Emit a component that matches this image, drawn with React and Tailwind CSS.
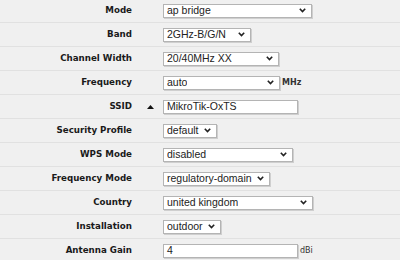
import React from 'react';

const Chevron = () => (
  <svg width="7" height="5" viewBox="0 0 7 5" className="shrink-0">
    <path d="M0.8 0.8 L3.5 3.6 L6.2 0.8" fill="none" stroke="#222" strokeWidth="1.6" />
  </svg>
);

const Select = ({ value, width }) => (
  <div
    className="h-[14px] flex items-center justify-between bg-white border border-[#b4b4b4] shadow-[1px_1px_0_#cfcfcf] pl-[3px] pr-[5px] text-[10.5px] text-[#222] leading-none"
    style={{ width }}
  >
    <span className="truncate">{value}</span>
    <Chevron />
  </div>
);

const TextBox = ({ value, width }) => (
  <div
    className="h-[14px] flex items-center bg-white border border-[#b4b4b4] shadow-[1px_1px_0_#cfcfcf] pl-[3px] text-[10.5px] text-[#222] leading-none"
    style={{ width }}
  >
    {value}
  </div>
);

const rows = [
  { label: 'Mode', kind: 'select', value: 'ap bridge', width: 149 },
  { label: 'Band', kind: 'select', value: '2GHz-B/G/N', width: 88 },
  { label: 'Channel Width', kind: 'select', value: '20/40MHz XX', width: 116 },
  { label: 'Frequency', kind: 'select', value: 'auto', width: 117, unit: 'MHz', unitBold: true },
  { label: 'SSID', kind: 'text', value: 'MikroTik-OxTS', width: 135, toggle: true },
  { label: 'Security Profile', kind: 'select', value: 'default', width: 54 },
  { label: 'WPS Mode', kind: 'select', value: 'disabled', width: 130 },
  { label: 'Frequency Mode', kind: 'select', value: 'regulatory-domain', width: 107 },
  { label: 'Country', kind: 'select', value: 'united kingdom', width: 150 },
  { label: 'Installation', kind: 'select', value: 'outdoor', width: 58 },
  { label: 'Antenna Gain', kind: 'text', value: '4', width: 135, unit: 'dBi' },
];

export default function App() {
  return (
    <div className="w-[400px] h-[260px] overflow-hidden bg-[#f0f0f0] font-['DejaVu_Sans',sans-serif]">
      <div className="-mt-px">
        {rows.map((row) => (
          <div key={row.label} className="h-[24px] flex items-center border-b border-[#e1e1e1]">
            <div className="w-[132px] text-right text-[8.7px] font-bold text-[#1a1a1a] leading-none">
              {row.label}
            </div>
            <div className="w-[31px] flex justify-end pr-[9px]">
              {row.toggle && (
                <svg width="7" height="4" viewBox="0 0 7 4">
                  <path d="M0 4 L3.5 0 L7 4 Z" fill="#111" />
                </svg>
              )}
            </div>
            <div className="flex items-center font-['Liberation_Sans',Arial,sans-serif]">
              {row.kind === 'select' ? (
                <Select value={row.value} width={row.width} />
              ) : (
                <TextBox value={row.value} width={row.width} />
              )}
              {row.unit && (
                <span
                  className={`ml-[2px] text-[8px] text-[#333] font-['DejaVu_Sans',sans-serif] ${row.unitBold ? 'font-bold' : ''}`}
                >
                  {row.unit}
                </span>
              )}
            </div>
          </div>
        ))}
      </div>
    </div>
  );
}
